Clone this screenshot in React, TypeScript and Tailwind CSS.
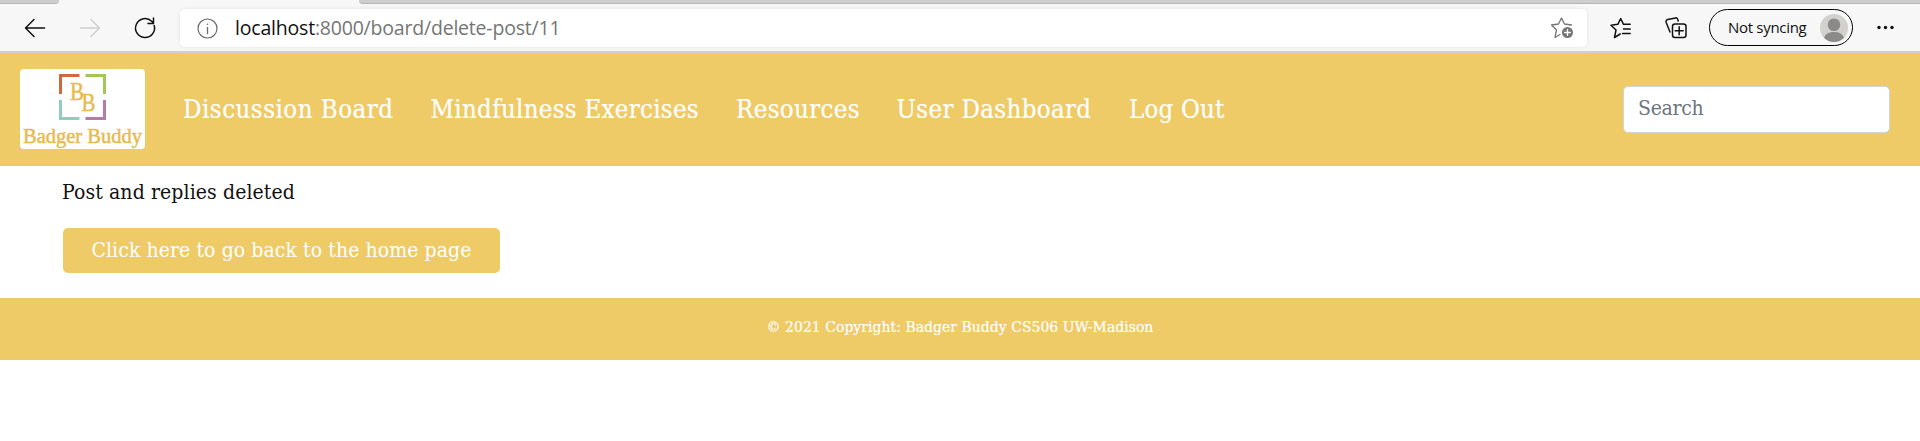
import type { ReactNode } from "react";

const navItems = [
  { label: "Discussion Board", style: "w-[247.5px] tracking-[0.5px]" },
  { label: "Mindfulness Exercises", style: "w-[305.5px] tracking-[0.28px]" },
  { label: "Resources", style: "w-[160.5px] tracking-[0.35px]" },
  { label: "User Dashboard", style: "w-[232.5px] tracking-[0.35px]" },
  { label: "Log Out", style: "w-[110px] tracking-[0.2px]" },
];

function Icon({ children, size = 24, className = "" }: { children: ReactNode; size?: number; className?: string }) {
  return (
    <svg
      width={size}
      height={size}
      viewBox={`0 0 ${size} ${size}`}
      fill="none"
      stroke="currentColor"
      strokeWidth="1.5"
      strokeLinecap="round"
      strokeLinejoin="round"
      className={`shrink-0 ${className}`}
    >
      {children}
    </svg>
  );
}

function TabStrip() {
  return (
    <div className="flex h-1 justify-between bg-[#f7f7f7]">
      <div className="w-[59px] rounded-br-[6px] border-b border-[#b5b5b5] bg-[#cdcdcd]" />
      <div className="w-[1561px] rounded-bl-[6px] border-b border-[#b5b5b5] bg-[#cdcdcd]" />
    </div>
  );
}

function Toolbar() {
  return (
    <div className="flex h-[49px] items-start border-b-2 border-[#cecfd1] bg-[#f7f7f7] pt-[5px] font-['Open_Sans',sans-serif]">
      <div className="flex h-[37px] w-[180px] items-center pl-[23px] text-[#111]">
        <Icon>
          <path d="M3 12H21.5M11 3.5L2.500 12L11 20.500" />
        </Icon>
        <Icon className="ml-[31px] text-[#cfcfcf]">
          <path d="M2.500 12H21.500M13 3.500L21.500 12L13 20.500" />
        </Icon>
        <Icon className="ml-[31px]">
          <path d="M21.200 9.500A9.500 9.500 0 1 1 18.700 5.300L20.500 7M20.500 2V7.500H15" />
        </Icon>
      </div>
      <div className="flex h-[38px] w-[1407px] items-center rounded-[5px] bg-white pr-[13px] pl-[17px] shadow-[0_0_4px_rgba(0,0,0,0.08)]">
        <Icon className="text-[#6b6b6b]" size={21}>
          <circle cx="10.500" cy="10.500" r="9.500" strokeWidth="1.2" />
          <path d="M10.500 9.500V15.500" strokeWidth="1.3" />
          <circle cx="10.500" cy="6.300" r="0.800" fill="currentColor" stroke="none" />
        </Icon>
        <span className="ml-[17px] grow text-[19.500px] leading-[38px] tracking-[-0.2px] whitespace-pre text-[#757575]">
          <span className="text-[#111]">localhost</span>:8000/board/delete-post/11
        </span>
        <Icon className="text-[#757575]" size={24}>
          <path
            d="M10 18.500L5 21.500L6.500 14L1.500 9L8.500 8L11.500 2L14.500 8L21.500 9"
            strokeWidth="1.300"
          />
          <circle cx="17.500" cy="16.500" r="5.500" fill="currentColor" stroke="none" />
          <path d="M17.500 13.700V19.300M14.700 16.500H20.300" stroke="white" strokeWidth="1.300" />
        </Icon>
      </div>
      <div className="flex h-[37px] items-center text-[#111]">
        <Icon className="ml-[22px]">
          <path d="M11.200 18L5.500 21.500L7 14L2 9.200L8.800 8.300L11.700 2.500L14.500 8.300H21.200M14.500 13H21.200M13.500 17.500H21.200" />
        </Icon>
        <Icon className="ml-[31px]">
          <rect x="8.500" y="8" width="13.500" height="13.500" rx="2.500" />
          <path d="M15.200 10.700V18.700M11.200 14.700H19.200M6 16L2.200 6.500Q1.500 4.200 3.800 3.600L11.500 1.900Q13.500 1.500 14.200 5" />
        </Icon>
      </div>
      <div className="ml-[21px] flex h-[37px] w-[144px] items-center justify-between rounded-full border-[1.500px] border-black pr-[4px] pl-[18px]">
        <span className="text-[15px] tracking-[-0.3px] whitespace-nowrap text-[#111]">Not syncing</span>
        <svg width="28" height="28" viewBox="0 0 28 28" className="shrink-0">
          <circle cx="14" cy="14" r="14" fill="#d2d1ce" />
          <circle cx="14" cy="10.700" r="6.300" fill="#8b8a88" />
          <path d="M4 23.800Q6 18 14 18Q22 18 24 23.800Q20 28 14 28Q8 28 4 23.800Z" fill="#8b8a88" />
        </svg>
      </div>
      <svg width="18" height="37" viewBox="0 0 18 37" className="ml-[24px]" fill="#111">
        <circle cx="2" cy="18.500" r="1.700" />
        <circle cx="8.500" cy="18.500" r="1.700" />
        <circle cx="15" cy="18.500" r="1.700" />
      </svg>
    </div>
  );
}

function Logo() {
  return (
    <svg width="125" height="80" viewBox="0 0 125 80" className="shrink-0 rounded-[4px] bg-white">
      <g fill="none" strokeWidth="3">
        <path d="M40.500 25V6.500H59.500" stroke="#d0693c" />
        <path d="M65.500 6.500H84.500V25" stroke="#a2c65a" />
        <path d="M40.500 31V49.500H59.500" stroke="#91cdbd" />
        <path d="M65.500 49.500H84.500V31" stroke="#b57cab" />
      </g>
      <g fill="#e8bb4b" stroke="#e8bb4b" strokeWidth="0.500" fontFamily="Liberation Serif, serif">
        <text x="50" y="30.500" fontSize="26" textLength="14" lengthAdjust="spacingAndGlyphs">B</text>
        <text x="61.500" y="42" fontSize="26" textLength="14" lengthAdjust="spacingAndGlyphs">B</text>
        <text x="3" y="73.500" fontSize="21.500" textLength="119" lengthAdjust="spacingAndGlyphs">Badger Buddy</text>
      </g>
    </svg>
  );
}

export default function App() {
  return (
    <div className="h-[441px] w-full overflow-hidden bg-white font-['DejaVu_Serif_Condensed','DejaVu_Serif',serif]">
      <TabStrip />
      <Toolbar />
      <nav className="flex h-[113px] items-center bg-[#eecb67] pr-[30px] pl-5">
        <div className="mb-[1px]">
          <Logo />
        </div>
        <div className="ml-[38px] flex grow pb-[1px] text-[25.600px] leading-[36px] text-white [-webkit-text-stroke:0.2px_white]">
          {navItems.map((item) => (
            <a key={item.label} className={`whitespace-nowrap ${item.style}`}>
              {item.label}
            </a>
          ))}
        </div>
        <input
          placeholder="Search"
          className="h-[47px] w-[267px] rounded-[5px] border border-[#ced4da] bg-white px-[14px] pb-[3px] text-[21px] tracking-[-0.3px] placeholder:text-[#6c757d]"
        />
      </nav>
      <main className="flex h-[132px] flex-col items-start pt-[9px] pl-[62px]">
        <p className="text-[21px] leading-[34px] tracking-[0.1px] text-[#111]">Post and replies deleted</p>
        <button className="mt-[19px] ml-[1px] h-[45px] w-[437px] rounded-[5px] bg-[#eecb67] text-[21px] tracking-[0.08px] whitespace-nowrap text-white">
          Click here to go back to the home page
        </button>
      </main>
      <footer className="flex h-[62px] items-center justify-center bg-[#eecb67] pb-[2px] text-[15.500px] tracking-[0.05px] text-white [-webkit-text-stroke:0.2px_white]">
        © 2021 Copyright: Badger Buddy CS506 UW-Madison
      </footer>
    </div>
  );
}
